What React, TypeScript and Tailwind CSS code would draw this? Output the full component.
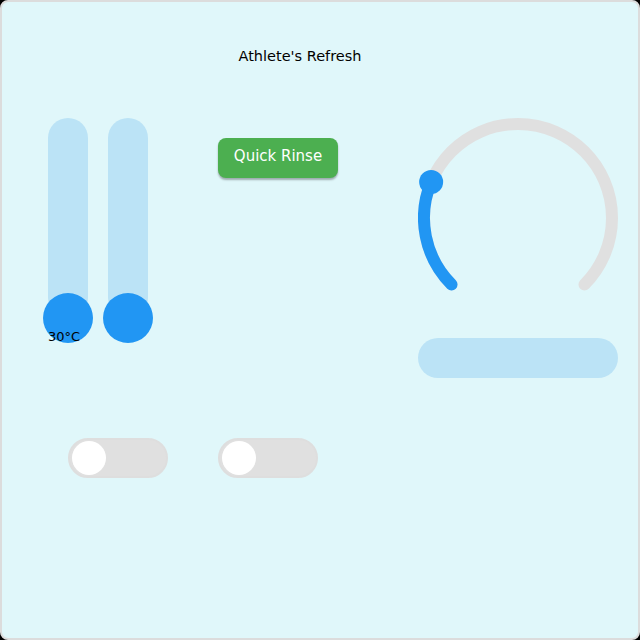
import React from 'react';

const VSlider = ({ label }: { label?: string }) => (
  <div className="relative h-[225px] w-[40px]">
    <div className="h-[200px] w-[40px] rounded-full bg-[#bbe3f6]" />
    <div className="absolute left-[-5px] top-[175px] h-[50px] w-[50px] rounded-full bg-[#2196f3]" />
    {label && (
      <span className="absolute left-0 top-[212px] text-[13px] leading-none text-black">{label}</span>
    )}
  </div>
);

const Toggle = () => (
  <div className="flex h-[40px] w-[100px] items-center rounded-full border-2 border-[#dedede] bg-[#e0e0e0] pl-[2px]">
    <div className="h-[34px] w-[34px] rounded-full bg-white" />
  </div>
);

const Dial = () => {
  const r = 94;
  const c = 100;
  const pt = (deg: number) => {
    const a = (deg * Math.PI) / 180;
    return [c + r * Math.cos(a), c - r * Math.sin(a)];
  };
  const [sx, sy] = pt(225);
  const [ex, ey] = pt(-45);
  const [kx, ky] = pt(157.5);
  return (
    <svg width="200" height="200" viewBox="0 0 200 200">
      <path
        d={`M ${sx} ${sy} A ${r} ${r} 0 1 1 ${ex} ${ey}`}
        fill="none"
        stroke="#e0e0e0"
        strokeWidth="12"
        strokeLinecap="round"
      />
      <path
        d={`M ${sx} ${sy} A ${r} ${r} 0 0 1 ${kx} ${ky}`}
        fill="none"
        stroke="#2196f3"
        strokeWidth="12"
        strokeLinecap="round"
      />
      <circle cx={kx} cy={ky} r="12" fill="#2196f3" />
    </svg>
  );
};

export default function App() {
  return (
    <div className="h-[640px] w-[640px] bg-black">
      <div
        className="flex h-[640px] w-[640px] flex-col rounded-lg border-2 border-[#dcdcdc] bg-[#e0f7fa] pl-[46px]"
        style={{ fontFamily: '"DejaVu Sans", sans-serif' }}
      >
        <div className="mt-[44px] w-[504px] text-center text-[14.5px] leading-[20px] text-black">
          Athlete's Refresh
        </div>
        <div className="mt-[52px] flex">
          <div className="flex w-[170px] gap-[20px]">
            <VSlider label="30°C" />
            <VSlider />
          </div>
          <div className="w-[200px] pt-[20px]">
            <button className="h-[40px] w-[120px] rounded-lg bg-[#4caf50] pb-[4px] text-[15px] text-white shadow-[0_2px_2px_rgba(0,0,0,0.3)]">
              Quick Rinse
            </button>
          </div>
          <div className="flex w-[200px] flex-col">
            <Dial />
            <div className="mt-[20px] h-[40px] w-[200px] rounded-full bg-[#bbe3f6]" />
          </div>
        </div>
        <div className="mt-[60px] flex">
          <div className="w-[170px] pl-[20px]">
            <Toggle />
          </div>
          <Toggle />
        </div>
      </div>
    </div>
  );
}
